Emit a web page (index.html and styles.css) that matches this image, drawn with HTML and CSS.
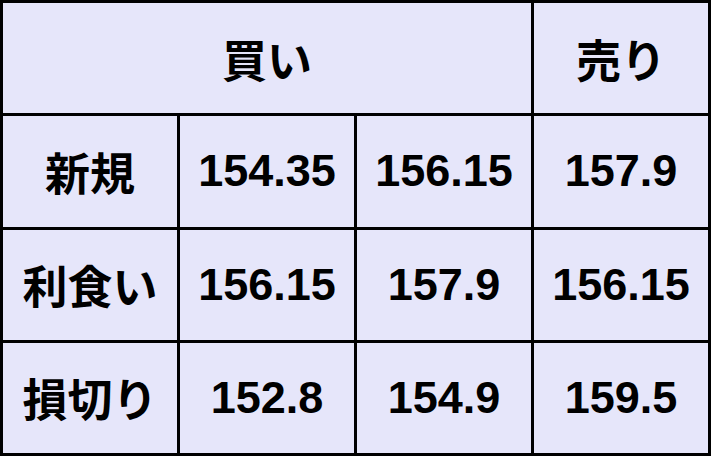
FILE: index.html
```html
<!DOCTYPE html>
<html lang="ja">
<head>
<meta charset="utf-8">
<title>価格表</title>
<link rel="stylesheet" href="styles.css">
</head>
<body>
<div class="grid">
  <div class="cell span3">買い</div>
  <div class="cell">売り</div>
  <div class="cell">新規</div>
  <div class="cell">154.35</div>
  <div class="cell">156.15</div>
  <div class="cell">157.9</div>
  <div class="cell">利食い</div>
  <div class="cell">156.15</div>
  <div class="cell">157.9</div>
  <div class="cell">156.15</div>
  <div class="cell">損切り</div>
  <div class="cell">152.8</div>
  <div class="cell">154.9</div>
  <div class="cell">159.5</div>
</div>
</body>
</html>
```
FILE: styles.css
```css
html, body {
  margin: 0;
  padding: 0;
  background: #e6e6fa;
}
.grid {
  box-sizing: border-box;
  width: 711px;
  height: 456px;
  display: grid;
  grid-template-columns: repeat(4, 1fr);
  grid-template-rows: repeat(4, 1fr);
  gap: 3px;
  padding: 3px;
  background: #000;
}
.cell {
  background: #e6e6fa;
  display: flex;
  align-items: center;
  justify-content: center;
  font-family: "Liberation Sans", "Noto Sans CJK JP", sans-serif;
  font-weight: bold;
  font-size: 45px;
  color: #000;
}
.span3 {
  grid-column: span 3;
}
```
